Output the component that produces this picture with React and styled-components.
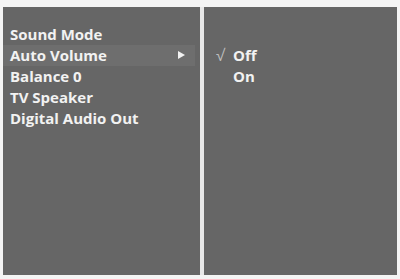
import React from "react";
import styled, { createGlobalStyle } from "styled-components";

const GlobalStyle = createGlobalStyle`
  html, body {
    margin: 0;
    padding: 0;
    background: #ffffff;
  }
  body {
    font-family: "Open Sans", "DejaVu Sans", sans-serif;
  }
`;

const Screen = styled.div`
  width: 400px;
  height: 279px;
  box-sizing: border-box;
  padding: 7px 3px 4px 3px;
  background: #f4f4f4;
  display: flex;
`;

const Panel = styled.div`
  flex: ${(p) => (p.$grow ? 1 : "0 0 197px")};
  background: #666666;
  padding-top: ${(p) => p.$top}px;
  box-sizing: border-box;
`;

const Divider = styled.div`
  width: 4px;
  background: #e8e8e8;
`;

const Row = styled.div`
  height: 20.8px;
  display: flex;
  align-items: center;
  padding-left: ${(p) => p.$indent}px;
  padding-right: 10px;
  font-size: 15px;
  font-weight: 700;
  color: #f2f2f2;
  background: ${(p) => (p.$active ? "#6e6e6e" : "transparent")};
  margin-right: ${(p) => (p.$active ? "5px" : "0")};
`;

const Label = styled.span`
  flex: 1;
`;

const Arrow = styled.span`
  width: 0;
  height: 0;
  border-top: 4px solid transparent;
  border-bottom: 4px solid transparent;
  border-left: 7px solid #f2f2f2;
`;

const Check = styled.span`
  width: 17px;
  color: #bdbdbd;
  font-weight: 400;
  font-size: 16px;
`;

const leftItems = ["Sound Mode", "Auto Volume", "Balance 0", "TV Speaker", "Digital Audio Out"];
const options = [
  { name: "Off", checked: true },
  { name: "On", checked: false },
];

export default function App() {
  return (
    <>
      <GlobalStyle />
      <Screen>
        <Panel $top={17}>
          {leftItems.map((item) => (
            <Row key={item} $indent={7} $active={item === "Auto Volume"}>
              <Label>{item}</Label>
              {item === "Auto Volume" && <Arrow />}
            </Row>
          ))}
        </Panel>
        <Divider />
        <Panel $grow $top={38}>
          {options.map((o) => (
            <Row key={o.name} $indent={12}>
              <Check>{o.checked ? "√" : ""}</Check>
              <Label>{o.name}</Label>
            </Row>
          ))}
        </Panel>
      </Screen>
    </>
  );
}
